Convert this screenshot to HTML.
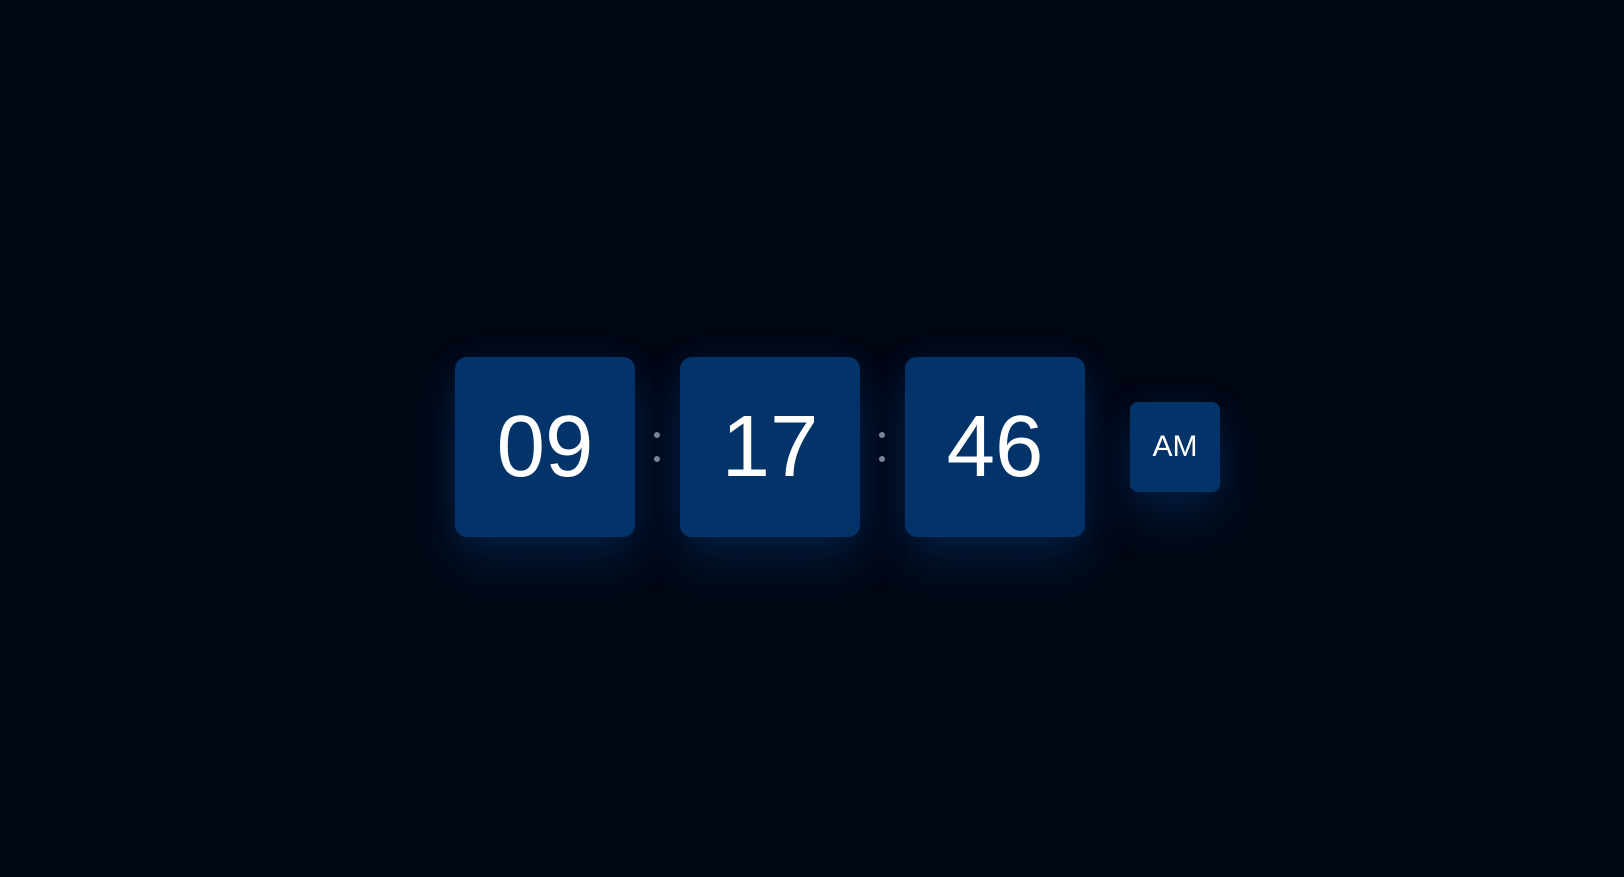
<!DOCTYPE html>
<html><head><style>
html,body{margin:0;padding:0;width:1624px;height:877px;background:#010714;overflow:hidden;font-family:"Liberation Sans",Arial,sans-serif;}
.b{position:absolute;background:#023469;border-radius:12px;color:#fff;display:flex;align-items:center;justify-content:center;box-shadow:0 24px 50px rgba(10,90,180,0.25),0 0 30px rgba(10,80,170,0.12);}
.d{top:357px;width:180px;height:180px;font-size:87px;}
.dot{position:absolute;width:6px;height:6px;border-radius:50%;background:#7d8898;}
</style></head><body>
<div class="b d" style="left:455px">09</div>
<div class="dot" style="left:654px;top:432px"></div><div class="dot" style="left:654px;top:456px"></div>
<div class="b d" style="left:680px">17</div>
<div class="dot" style="left:879px;top:432px"></div><div class="dot" style="left:879px;top:456px"></div>
<div class="b d" style="left:905px">46</div>
<div class="b" style="left:1130px;top:402px;width:90px;height:90px;border-radius:8px;font-size:30px;">AM</div>
</body></html>
